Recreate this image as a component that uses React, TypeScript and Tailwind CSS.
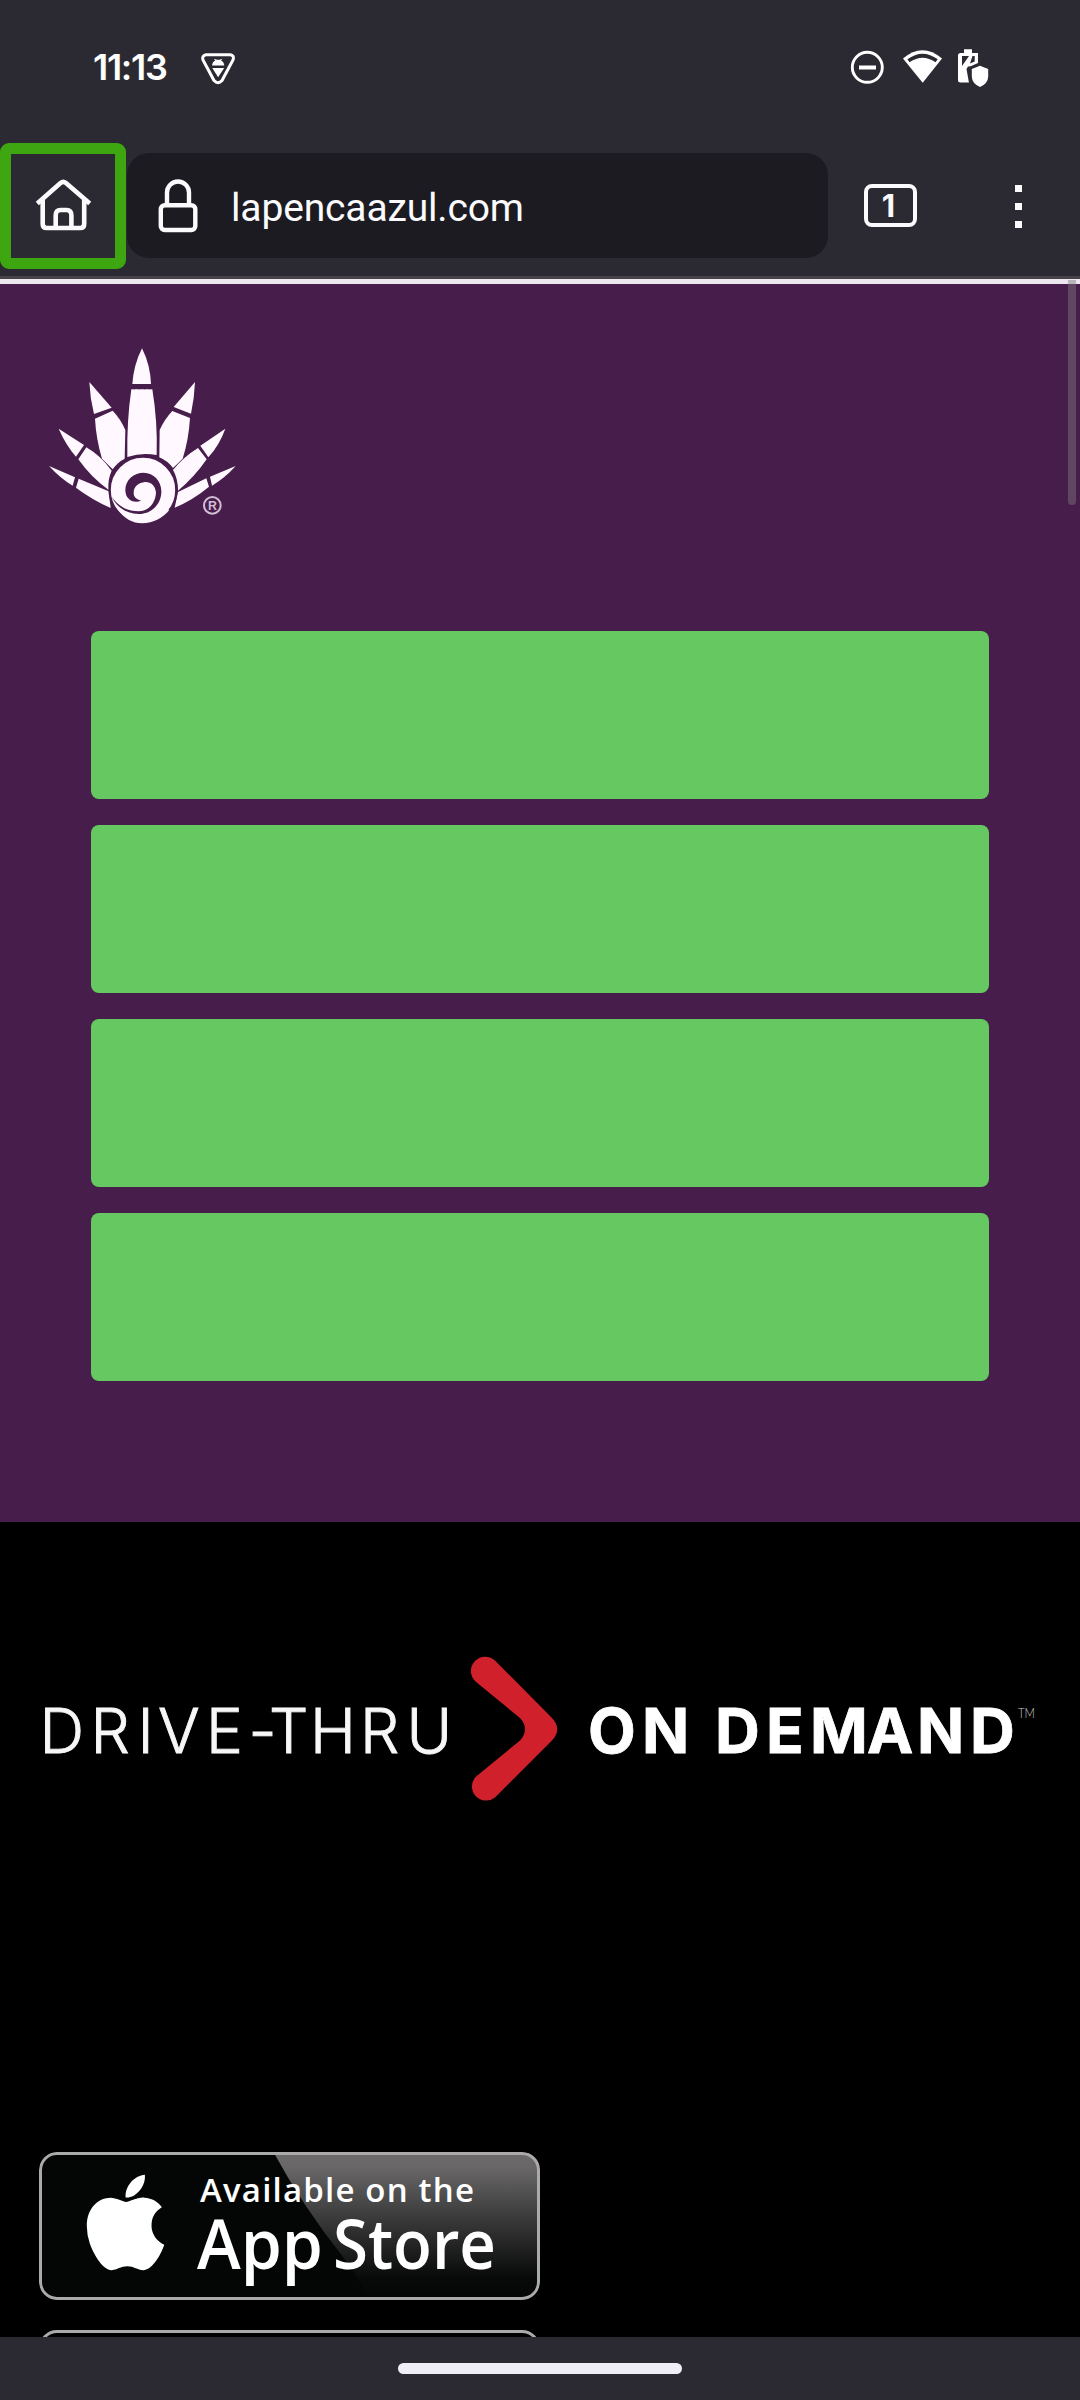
import { FaApple } from "react-icons/fa";

function VpnIcon() {
  return (
    <svg className="h-9 w-9" viewBox="200 50 36 36" fill="none">
      <path d="M206 54.7 H230.5 Q234.6 55.6 233 60 L222 80.5 Q218 84.8 214 80.5 L203 60 Q201.6 55.6 206 54.7 Z" stroke="#fff" strokeWidth="3" />
      <path d="M212 65.6 Q212.6 61.2 215.3 60.4 L213.8 58.8 L217 59.8 H219.4 L222.4 58.8 L221 60.4 Q223.8 61.4 224.3 65.6 Z M212.3 68 H224.2 L218.1 77.2 Z" fill="#fff" />
    </svg>
  );
}

function StatusIcons() {
  return (
    <svg className="h-10 w-[140px]" viewBox="850 49 140 40" fill="none">
      <circle cx="867.3" cy="67.3" r="15" stroke="#fff" strokeWidth="2.9" />
      <path d="M859 67.5 H876" stroke="#fff" strokeWidth="4" />
      <path d="M922.7 82.7 L903 58.5 Q922.5 42 942 58.5 Z" fill="#fff" />
      <path d="M907.4 59.3 Q922.6 48 937.7 59.3 L935.5 62.3 Q922.6 53 909.6 62.3 Z" fill="#2b2a33" />
      <path d="M964 53 V49.3 H972 V53 H978 V63 L969 67 V82.5 H960.5 Q958 82.5 958 80 V55.5 Q958 53 960.5 53 Z" fill="#fff" />
      <path d="M962 56 H969 L962 66 Z M972.5 56 H974.7 V61.5 L970 63.5 Z M966.5 69 L968 66.5 H972 V83 H969 Z" fill="#2b2a33" />
      <path d="M980 65.8 L988.2 69 V76.5 Q988 83.5 980 87 Q972 83.5 971.8 76.5 V69 Z" fill="#fff" />
    </svg>
  );
}

function HomeIcon() {
  return (
    <svg className="h-[52px] w-[56px]" viewBox="35 179 56 52" fill="none" stroke="#fbfbfe" strokeWidth="4.6">
      <path d="M37.3 203.5 L60.5 183 Q63.2 180.9 66 183 L89.7 203.5" />
      <path d="M42.7 200 V224 Q42.7 228 46.7 228 H80.2 Q84.2 228 84.2 224 V200" />
      <path d="M55.7 228 V215.5 Q55.7 210 60.5 210 H66.5 Q71.4 210 71.4 215.5 V228" />
    </svg>
  );
}

function LockIcon() {
  return (
    <svg className="h-[54px] w-[40px]" viewBox="158.500 179 40 54" fill="none" stroke="#fbfbfe" strokeWidth="4.4">
      <rect x="161.300" y="205.200" width="34.500" height="24.800" rx="4" />
      <path d="M167.500 205 V192.500 A11 11 0 0 1 189.500 192.500 V205" />
    </svg>
  );
}

function AgaveLogo() {
  return (
    <svg className="h-[210px] w-[230px]" viewBox="0 0 690 630">
      <g fill="#fff8ff">
        <path d="M336 55 Q311 105 307 162 L363 162 Q361 105 336 55 Z" />
        <path d="M304 178 L367 178 Q383 275 380 375 Q336 366 292 381 Q290 275 304 178 Z" />
        <path d="M178 156 L245 233 L192 252 Q180 205 178 156 Z" />
        <path d="M195 266 L248 242 Q272 267 286 300 L284 386 Q262 397 248 418 L216 386 Q198 325 195 266 Z" />
        <path d="M495 156 L431 231 L483 251 Q493 205 495 156 Z" />
        <path d="M480 264 L427 243 Q404 267 389 300 L388 382 Q412 392 429 414 L458 386 Q476 330 480 264 Z" />
        <path d="M86 296 L162 345 L138 380 Q108 346 86 296 Z" />
        <path d="M145 388 L169 352 Q212 377 245 422 Q232 450 236 480 Q184 443 145 388 Z" />
        <path d="M586 296 L511 347 L535 382 Q568 346 586 296 Z" />
        <path d="M530 388 L504 354 Q460 381 429 420 Q444 445 444 482 Q492 443 530 388 Z" />
        <path d="M57 408 L135 442 L128 467 Q92 446 57 408 Z" />
        <path d="M138 473 L146 446 L236 484 L242 534 Q184 508 138 473 Z" />
        <path d="M617 408 L540 440 L546 467 Q586 443 617 408 Z" />
        <path d="M537 470 L529 445 L444 486 L434 533 Q489 510 537 470 Z" />
        <circle cx="339" cy="480" r="100" stroke="#471d4b" strokeWidth="7" />
        <path d="M249 500 C262 556 301 580 336 580 C370 580 400 562 418 540 L300 500 Z" />
      </g>
      <path d="M334 512 C310 522 286 508 286 480 C286 448 312 428 341 428 C372 428 396 455 394 488 C392 525 362 553 326 552 C288 550 260 532 245 500 C266 530 292 543 326 544 C352 544 376 522 378 488 C376 466 362 455 345 456 C326 458 311 470 311 488 C311 502 320 508 334 512 Z" fill="#471d4b" />
      <path d="M304 171 l8 5 l8 -7 l8 7 l8 -7 l8 7 l8 -7 l8 7 l8 -5" fill="none" stroke="#471d4b" strokeWidth="4" />
      <circle cx="547" cy="526" r="25" fill="none" stroke="#d2bdd5" strokeWidth="6" />
      <text x="534" y="540" fontFamily="Liberation Sans" fontWeight="700" fontSize="37" fill="#d2bdd5">R</text>
    </svg>
  );
}

function DriveThruLogo() {
  return (
    <svg className="h-[160px] w-full" viewBox="0 1650 1080 160">
      <text x="39.500 90.500 137.500 158 206 248.500 269 310 360 406.500" y="1752.500" fontFamily="Inter" fontWeight="300" fontSize="62" fill="#f7f7f7" stroke="#f7f7f7" strokeWidth=".9">DRIVE-THRU</text>
      <path d="M495 1660.500 L551.500 1717.500 Q563 1729 551.500 1741 L495 1797.500 A14.200 14.200 0 0 1 475.500 1777 L520 1740.500 Q530 1729 520 1718 L475.500 1681.500 A14.200 14.200 0 0 1 495 1660.500 Z" fill="#cf202c" />
      <text x="588 642 690 715 766 810 867 917 970" y="1752.500" fontFamily="Inter" fontWeight="700" fontSize="62" fill="#fff" stroke="#fff" strokeWidth=".8">ON DEMAND</text>
      <text x="1018" y="1718" textLength="17" lengthAdjust="spacingAndGlyphs" fontFamily="Lato" fontWeight="300" fontSize="13" fill="#ccc">TM</text>
    </svg>
  );
}

function AppStoreBadge() {
  return (
    <div className="relative h-[148px] w-[501px] overflow-hidden rounded-[18px] bg-[#040606]">
      <svg className="absolute inset-0 h-full w-full" viewBox="39 2152 501 148">
        <defs>
          <linearGradient id="gloss" x1="0" y1="0" x2="0" y2="1">
            <stop offset="0" stopColor="#6c6a6b" />
            <stop offset=".1" stopColor="#686667" />
            <stop offset=".5" stopColor="#333333" />
            <stop offset=".85" stopColor="#080909" />
            <stop offset="1" stopColor="#040606" />
          </linearGradient>
        </defs>
        <path d="M274 2153 Q302 2205 343 2257 Q360 2279 369 2300 H540 V2153 Z" fill="url(#gloss)" />
        <g fontFamily="Open Sans" fill="#fff">
          <text x="200" y="2201.500" textLength="274" lengthAdjust="spacing" fontWeight="600" fontSize="33">Available on the</text>
          <text x="197" y="2269" textLength="126" lengthAdjust="spacingAndGlyphs" fontWeight="600" fontSize="69">App</text>
          <text x="333" y="2269" textLength="163" lengthAdjust="spacingAndGlyphs" fontWeight="600" fontSize="69">Store</text>
        </g>
      </svg>
      <FaApple preserveAspectRatio="none" className="absolute top-[16px] left-[46.5px] h-[109px] w-[79px] text-white" />
      <div className="absolute inset-0 rounded-[18px] border-[3px] border-[#aaaaaa]" />
    </div>
  );
}

export default function App() {
  return (
    <div className="flex h-[2400px] w-[1080px] flex-col overflow-hidden bg-black font-[Roboto,sans-serif]">
      <header className="h-[284px] shrink-0 border-b-[5px] border-[#ece6ef] bg-[#2b2a33]">
        <div className="flex h-[143px] items-start justify-between pt-[49px] pr-[90px] pl-[92px] text-white">
          <div className="flex items-start">
            <span className="w-[108px] pl-px font-[Inter,sans-serif] text-[36px] leading-[37px] font-semibold tracking-[-1.3px]">11:13</span>
            <div className="pt-px"><VpnIcon /></div>
          </div>
          <StatusIcons />
        </div>
        <div className="flex h-[133px] items-start">
          <button className="flex h-[126px] w-[126px] items-start justify-center rounded-[9px] border-[11px] border-[#3ea610] pt-[25px]">
            <HomeIcon />
          </button>
          <div className="mt-[10px] ml-px flex h-[105px] w-[701px] items-center rounded-[22px] bg-[#1c1b22] pl-[31px]">
            <LockIcon />
            <span className="ml-[33px] pt-[5px] text-[39px] tracking-[-0.15px] text-[#fbfbfe]">lapencaazul.com</span>
          </div>
          <div className="mt-[41px] ml-[36px] flex h-[43px] w-[53px] items-center justify-center rounded-[8px] border-[4.5px] border-[#fbfbfe] pr-1 font-[Inter,sans-serif] text-[31px] leading-none font-bold text-[#fbfbfe]">1</div>
          <div className="mt-[42px] ml-[98px] flex flex-col gap-[11px]">
            <i className="size-[7px] bg-[#fbfbfe]" />
            <i className="size-[7px] bg-[#fbfbfe]" />
            <i className="size-[7px] bg-[#fbfbfe]" />
          </div>
        </div>
        <div className="h-[3px] bg-[#454348]" />
      </header>

      <section className="relative h-[1238px] shrink-0 bg-[#471d4b]">
        <div className="pt-[46px] pl-[30px]"><AgaveLogo /></div>
        <div className="mt-[91px] flex flex-col gap-[26px] px-[91px]">
          <div className="h-[168px] rounded-[8px] bg-[#66c860]" />
          <div className="h-[168px] rounded-[8px] bg-[#66c860]" />
          <div className="h-[168px] rounded-[8px] bg-[#66c860]" />
          <div className="h-[168px] rounded-[8px] bg-[#66c860]" />
        </div>
        <div className="absolute top-[-4px] right-[4px] h-[225px] w-[8px] rounded-b-[4px] bg-[#7d7d7d]/45" />
      </section>

      <section className="h-[815px] shrink-0 overflow-hidden bg-black pt-[128px]">
        <DriveThruLogo />
        <div className="mt-[342px] flex flex-col gap-[30px] pl-[39px]">
          <AppStoreBadge />
          <div className="h-[148px] w-[501px] rounded-[18px] border-[3px] border-[#aaaaaa]" />
        </div>
      </section>

      <footer className="flex h-[63px] shrink-0 justify-center bg-[#2b2a33] pt-[26px]">
        <div className="h-[11px] w-[284px] rounded-full bg-[#efedf5]" />
      </footer>
    </div>
  );
}
